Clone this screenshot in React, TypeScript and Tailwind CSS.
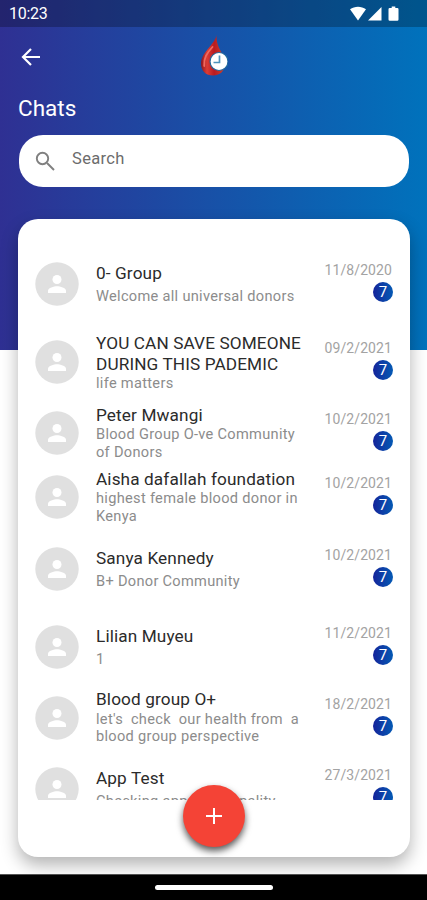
import clsx from "clsx";

interface Chat {
  title: string;
  subtitle: string;
  date: string;
  unread: number;
  layout: "single" | "wrapped-title" | "wrapped-subtitle";
}

const chats: Chat[] = [
  { title: "0- Group", subtitle: "Welcome all universal donors", date: "11/8/2020", unread: 7, layout: "single" },
  { title: "YOU CAN SAVE SOMEONE\nDURING THIS PADEMIC", subtitle: "life matters", date: "09/2/2021", unread: 7, layout: "wrapped-title" },
  { title: "Peter Mwangi", subtitle: "Blood Group O-ve Community\nof Donors", date: "10/2/2021", unread: 7, layout: "wrapped-subtitle" },
  { title: "Aisha dafallah foundation", subtitle: "highest female blood donor in\nKenya", date: "10/2/2021", unread: 7, layout: "wrapped-subtitle" },
  { title: "Sanya Kennedy", subtitle: "B+ Donor Community", date: "10/2/2021", unread: 7, layout: "single" },
  { title: "Lilian Muyeu", subtitle: "1", date: "11/2/2021", unread: 7, layout: "single" },
  { title: "Blood group O+", subtitle: "let's  check  our health from  a\nblood group perspective", date: "18/2/2021", unread: 7, layout: "wrapped-subtitle" },
  { title: "App Test", subtitle: "Checking app functionality", date: "27/3/2021", unread: 7, layout: "single" },
];

const rowStyles = {
  single: "h-[78px] pt-[18px]",
  "wrapped-title": "h-[78px] pt-[9.5px]",
  "wrapped-subtitle": "h-[64.3px] pt-[3.7px]",
};

const StatusBar = () => (
  <div className="flex h-[27px] items-center justify-between bg-black/25 pl-[9px] pr-[27px] text-white">
    <span className="text-[16px] leading-[28px] tracking-[-0.3px]">10:23</span>
    <svg width="50" height="16" viewBox="0 0 50 16" fill="currentColor">
      <path d="M0 3.2C4.5-.2 11.5-.2 16 3.2L8 14.5Z" />
      <path d="M31.500 1v13.500H18Z" />
      <path d="M41.700.5h3.600v1.500h2q1.200 0 1.200 1.200v10.300q0 1.200-1.200 1.200h-7.600q-1.200 0-1.200-1.200V3.200Q38.500 2 39.700 2h2Z" />
    </svg>
  </div>
);

const Logo = () => (
  <svg width="28" height="42" viewBox="0 0 28 42">
    <defs>
      <linearGradient id="drop" x1="0" y1="0" x2="1" y2="0">
        <stop offset="0" stopColor="#8d1720" />
        <stop offset="0.25" stopColor="#dc3c35" />
        <stop offset="0.55" stopColor="#b91b20" />
        <stop offset="1" stopColor="#d2432c" />
      </linearGradient>
    </defs>
    <path d="M16.500 0C16 8 1.500 17 1 28c-.3 8 5 12.500 12 12.500 7.500 0 12-5 12-12C25 19 15.500 13 16.500 0Z" fill="url(#drop)" />
    <path d="M12.500 12C7 18 3.500 23 4.200 31" fill="none" stroke="#ee6a60" strokeWidth="1.800" strokeLinecap="round" />
    <circle cx="19" cy="26.500" r="9" fill="#fff" stroke="#21689e" strokeWidth="1.200" />
    <path d="M19.500 20.500v7h-6" fill="none" stroke="#4d94bd" strokeWidth="1.700" />
  </svg>
);

const Avatar = () => (
  <svg className="shrink-0" width="44" height="44" viewBox="0 0 44 44">
    <circle cx="22" cy="22" r="21.700" fill="#e0e0e0" />
    <circle cx="22" cy="17.500" r="4.500" fill="#fff" />
    <path d="M13 31v-2.200c0-3 6-4.500 9-4.500s9 1.500 9 4.500V31Z" fill="#fff" />
  </svg>
);

const ChatRow = ({ chat }: { chat: Chat }) => (
  <li className={clsx("relative flex shrink-0", rowStyles[chat.layout])}>
    <div className="absolute inset-y-0 left-0 flex items-center">
      <Avatar />
    </div>
    <div className="ml-[61px] whitespace-pre">
      <div className="text-[17.2px] leading-[21px] tracking-[0.12px] text-[#2b2b2b]">{chat.title}</div>
      <div
        className={clsx(
          "text-[14.600px] leading-[17.500px] tracking-[0.3px] text-[#8c8c8c]",
          chat.layout === "single" ? "mt-[4px]" : "mt-[0.5px]",
        )}
      >
        {chat.subtitle}
      </div>
    </div>
    <div className="absolute inset-y-0 right-0 flex flex-col items-end justify-center pb-[4px]">
      <span className="mr-px text-[14px] leading-[17px] tracking-[0.1px] text-[#a3a3a3]">{chat.date}</span>
      <span className="mt-[3px] flex size-5 items-center justify-center rounded-full bg-linear-to-r from-[#14229a] to-[#0459b4] text-[15px] leading-5 text-white">
        {chat.unread}
      </span>
    </div>
  </li>
);

export default function App() {
  return (
    <div className="flex h-[900px] w-[427px] flex-col overflow-hidden bg-[linear-gradient(to_right,#2f3093,#0072bc)] bg-[length:100%_350px] bg-no-repeat font-[Roboto,sans-serif]">
      <StatusBar />
      <header className="grid h-[60px] shrink-0 grid-cols-3 items-center px-5">
        <svg width="22" height="22" viewBox="0 0 22 22" fill="none" stroke="#fff" strokeWidth="2.200">
          <path d="M20 11H3.500M11 3 3 11l8 8" />
        </svg>
        <div className="justify-self-center pb-[3px]">
          <Logo />
        </div>
      </header>
      <h1 className="ml-[18px] mt-[7px] text-[22.5px] leading-7 text-white">Chats</h1>
      <div className="ml-[19px] mr-[18px] mt-[13px] flex h-[52px] shrink-0 items-center rounded-[24px] bg-white pl-[16px]">
        <svg width="21" height="21" viewBox="0 0 21 21" fill="none" stroke="#808080" strokeWidth="1.900">
          <circle cx="7.500" cy="7.500" r="5.700" />
          <path d="m12 12 7 7" />
        </svg>
        <span className="-mt-[4px] ml-[16px] text-[16.500px] tracking-[0.35px] text-[#6c6c6c]">Search</span>
      </div>
      <main className="relative ml-[18px] mr-[17px] mt-[32px] h-[638px] shrink-0 rounded-[20px] bg-white px-[17px] pt-[26px] shadow-[0_8px_17px_rgba(0,0,0,0.3)]">
        <ul className="flex h-[555px] flex-col overflow-hidden">
          {chats.map((chat) => (
            <ChatRow key={chat.title} chat={chat} />
          ))}
        </ul>
        <button
          aria-label="New chat"
          className="absolute bottom-[10px] left-[165px] flex size-[62px] items-center justify-center rounded-full bg-[#f44336] shadow-[0_4px_7px_rgba(0,0,0,0.65)]"
        >
          <svg width="16" height="16" viewBox="0 0 16 16" stroke="#fff" strokeWidth="2">
            <path d="M8 0v16M0 8h16" />
          </svg>
        </button>
      </main>
      <footer className="mt-auto flex h-[26px] shrink-0 items-center justify-center border-t border-[#555] bg-black">
        <div className="h-[5px] w-[118px] rounded-full bg-white" />
      </footer>
    </div>
  );
}
